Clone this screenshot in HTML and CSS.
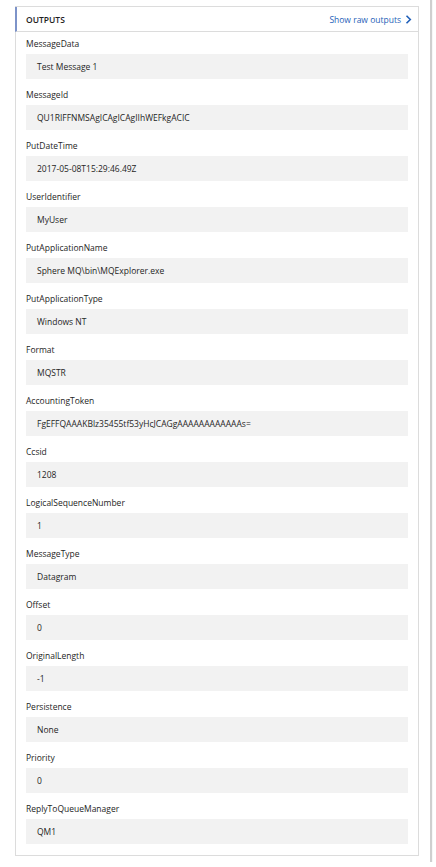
FILE: index.html
```html
<!DOCTYPE html>
<html>
<head>
<meta charset="utf-8">
<link rel="stylesheet" href="styles.css">
</head>
<body>
<div class="frame">
  <section class="card">
    <header class="card-head">
      <span class="title">OUTPUTS</span>
      <a class="raw">Show raw outputs <svg class="chev" width="7" height="9" viewBox="0 0 7 9"><path d="M1.5 0.8 L5.3 4.5 L1.5 8.2" fill="none" stroke="#1f5fb8" stroke-width="1.6"/></svg></a>
    </header>
    <div class="fields">
      <div class="field"><div class="label">MessageData</div><div class="value">Test Message 1</div></div>
      <div class="field"><div class="label">MessageId</div><div class="value">QU1RIFFNMSAgICAgICAgIIhWEFkgACIC</div></div>
      <div class="field"><div class="label">PutDateTime</div><div class="value">2017-05-08T15:29:46.49Z</div></div>
      <div class="field"><div class="label">UserIdentifier</div><div class="value">MyUser</div></div>
      <div class="field"><div class="label">PutApplicationName</div><div class="value">Sphere MQ\bin\MQExplorer.exe</div></div>
      <div class="field"><div class="label">PutApplicationType</div><div class="value">Windows NT</div></div>
      <div class="field"><div class="label">Format</div><div class="value">MQSTR</div></div>
      <div class="field"><div class="label">AccountingToken</div><div class="value">FgEFFQAAAKBlz35455tf53yHcJCAGgAAAAAAAAAAAAs=</div></div>
      <div class="field"><div class="label">Ccsid</div><div class="value">1208</div></div>
      <div class="field"><div class="label">LogicalSequenceNumber</div><div class="value">1</div></div>
      <div class="field"><div class="label">MessageType</div><div class="value">Datagram</div></div>
      <div class="field"><div class="label">Offset</div><div class="value">0</div></div>
      <div class="field"><div class="label">OriginalLength</div><div class="value">-1</div></div>
      <div class="field"><div class="label">Persistence</div><div class="value">None</div></div>
      <div class="field"><div class="label">Priority</div><div class="value">0</div></div>
      <div class="field"><div class="label">ReplyToQueueManager</div><div class="value">QM1</div></div>
    </div>
  </section>
</div>
</body>
</html>
```
FILE: styles.css
```css
html, body {
  margin: 0;
  padding: 0;
  background: #ffffff;
}
body {
  font-family: "Open Sans", "Noto Sans", sans-serif;
  color: #252525;
  font-size: 9px;
}
.frame {
  width: 430px;
  height: 862px;
  box-sizing: border-box;
  padding: 6px 12px 0 15px;
  background: #fff;
  box-shadow: 1px 1px 1px 1px #cfcfcf;
}
.card {
  border: 1px solid #dcdcdc;
  box-sizing: border-box;
  width: 404px;
  height: 850px;
}
.card-head {
  display: flex;
  align-items: center;
  justify-content: space-between;
  height: 24px;
  border-bottom: 1px solid #dcdcdc;
  border-left: 2px solid #7d93c9;
  margin-left: -1px;
  padding: 0 6px 0 9px;
}
.title {
  font-weight: 600;
  font-size: 8.5px;
  color: #1e1e1e;
}
.raw {
  color: #1f5fb8;
  font-size: 8.5px;
  display: flex;
  align-items: center;
  gap: 4px;
}
.chev { display: block; }
.fields {
  padding: 4px 10px 0 10px;
}
.field {
  padding-bottom: 8px;
}
.label {
  height: 16px;
  line-height: 16px;
  margin-bottom: 2px;
  font-size: 8.5px;
}
.value {
  background: #f2f2f2;
  height: 25px;
  line-height: 25px;
  padding-left: 11px;
  font-size: 8.5px;
}
```
